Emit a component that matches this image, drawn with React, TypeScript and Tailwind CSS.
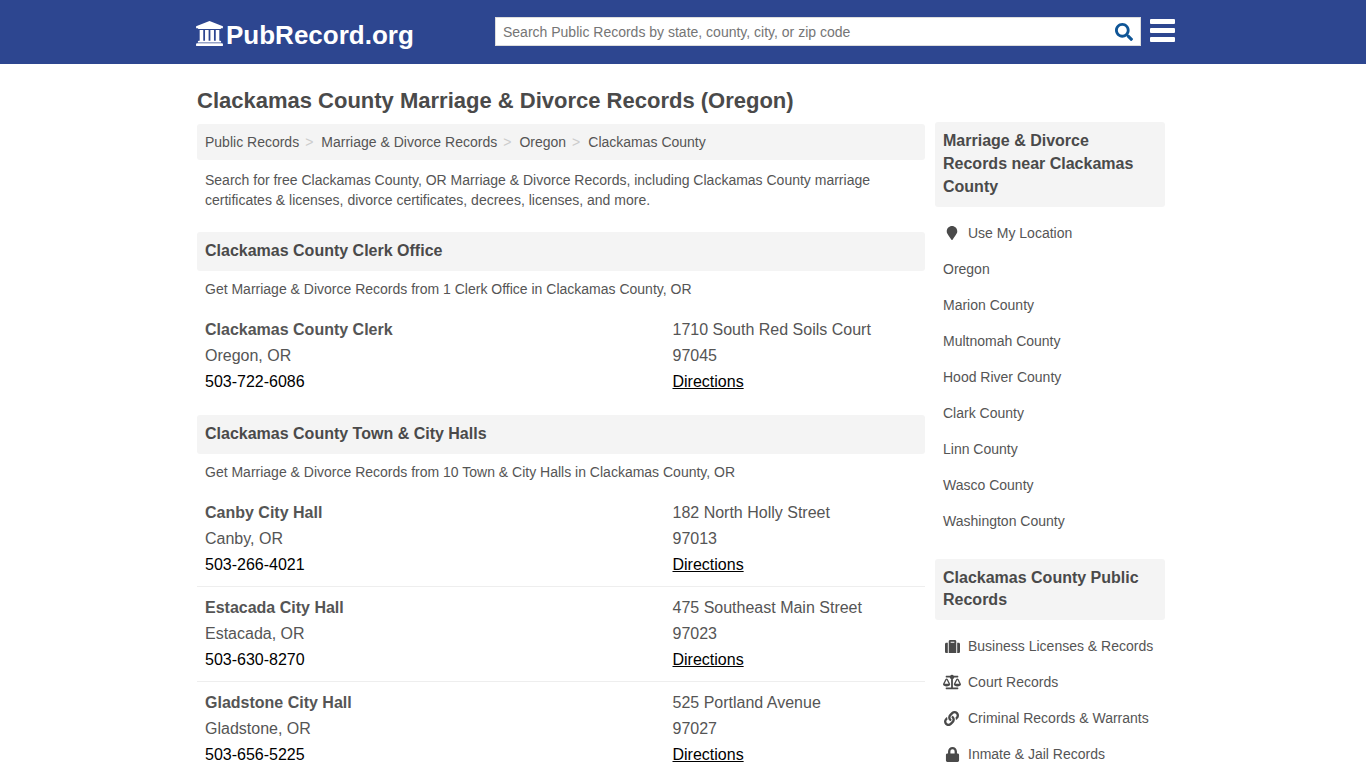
import { FaSearch, FaSuitcase, FaBalanceScale, FaLink, FaLock, FaMapMarker } from "react-icons/fa";

const Office = ({ name, city, phone, street, zip, border }: { name: string; city: string; phone: string; street: string; zip: string; border?: boolean }) => (
  <div className={`flex px-2 text-[16px] leading-[26px] ${border ? "pb-[8px] border-b border-[#eeeeee] mb-[8px]" : "pb-[9px]"}`}>
    <div className="w-[467.5px]">
      <div className="font-bold">{name}</div>
      <div>{city}</div>
      <div className="text-black">{phone}</div>
    </div>
    <div>
      <div>{street}</div>
      <div>{zip}</div>
      <div className="text-black underline">Directions</div>
    </div>
  </div>
);

const Heading = ({ children }: { children: string }) => (
  <h2 className="bg-[#f4f4f4] rounded-[3px] h-[39px] px-2 pb-[2px] flex items-center text-[16px] font-bold text-[#4a4a4a]">{children}</h2>
);

const Side = ({ children, icon }: { children: string; icon?: React.ReactNode }) => (
  <div className="h-[36px] flex items-center px-2 text-[14px] text-[#555555]">
    {icon && <span className="w-[25px] flex shrink-0 items-center text-[#4a4a4a]">{icon}</span>}
    {children}
  </div>
);

const Sep = () => <span className="text-[#cccccc] text-[14px] pl-[6px] pr-[8px]">&gt;</span>;

const Bank = () => (
  <svg viewBox="0 0 1920 1792" className="w-[27px] h-[25px] mr-[3px] -mt-[4px] shrink-0" fill="currentColor">
    <path d="M960 0l960 384v128h-128q0 26-20.5 45t-48.5 19h-1526q-28 0-48.5-19t-20.5-45h-128v-128z" />
    <path d="M256 640h256v768h128v-768h256v768h128v-768h256v768h128v-768h256v768h59q28 0 48.5 19t20.5 45v64h-1664v-64q0-26 20.5-45t48.5-19h59z" />
    <path d="M1851 1600q28 0 48.5 19t20.5 45v128h-1920v-128q0-26 20.5-45t48.5-19z" />
  </svg>
);

export default function App() {
  return (
    <div className="h-screen overflow-hidden bg-white text-[#555555] font-['Liberation_Sans',Arial,sans-serif]">
      <header className="h-16 bg-[#2d4690]">
        <div className="w-[968px] ml-[197px] h-full flex items-center relative">
          <div className="w-[299px] shrink-0 flex items-center text-white font-bold text-[26px] -ml-[1px] pt-[6px]">
            <Bank />
            <span>PubRecord.org</span>
          </div>
          <div className="w-[646px] shrink-0 h-[29px] -mt-[1px] pt-[1px] bg-white border border-[#dddddd] flex items-center justify-between pl-[7px] pr-[7px] text-[14px] text-[#757575]">
            <span>Search Public Records by state, county, city, or zip code</span>
            <FaSearch className="w-[18px] h-[18px] text-[#0f5596]" />
          </div>
          <div className="ml-[9px] -mt-[3px] w-[25px] shrink-0 flex flex-col gap-[4px]">
            <div className="h-[5px] bg-white rounded-[1px]" />
            <div className="h-[5px] bg-white rounded-[1px]" />
            <div className="h-[5px] bg-white rounded-[1px]" />
          </div>
        </div>
      </header>
      <main className="w-[968px] ml-[197px]">
        <h1 className="text-[22px] font-bold text-[#4a4a4a] leading-[26px] pt-[24px] pb-[10px]">Clackamas County Marriage &amp; Divorce Records (Oregon)</h1>
        <div className="flex gap-[10px] items-start">
          <div className="w-[728px]">
            <div className="bg-[#f4f4f4] rounded-[3px] h-[36px] px-2 flex items-center text-[14px]">
              <span>Public Records</span><Sep /><span>Marriage &amp; Divorce Records</span><Sep /><span>Oregon</span><Sep /><span>Clackamas County</span>
            </div>
            <p className="px-2 pt-[10px] pb-[22px] text-[14px] leading-[20px]">Search for free Clackamas County, OR Marriage &amp; Divorce Records, including Clackamas County marriage certificates &amp; licenses, divorce certificates, decrees, licenses, and more.</p>
            <Heading>Clackamas County Clerk Office</Heading>
            <p className="px-2 pt-[8px] pb-[18px] text-[14px] leading-[20px]">Get Marriage &amp; Divorce Records from 1 Clerk Office in Clackamas County, OR</p>
            <Office name="Clackamas County Clerk" city="Oregon, OR" phone="503-722-6086" street="1710 South Red Soils Court" zip="97045" />
            <div className="h-[11px]" />
            <Heading>Clackamas County Town &amp; City Halls</Heading>
            <p className="px-2 pt-[8px] pb-[18px] text-[14px] leading-[20px]">Get Marriage &amp; Divorce Records from 10 Town &amp; City Halls in Clackamas County, OR</p>
            <Office border name="Canby City Hall" city="Canby, OR" phone="503-266-4021" street="182 North Holly Street" zip="97013" />
            <Office border name="Estacada City Hall" city="Estacada, OR" phone="503-630-8270" street="475 Southeast Main Street" zip="97023" />
            <Office border name="Gladstone City Hall" city="Gladstone, OR" phone="503-656-5225" street="525 Portland Avenue" zip="97027" />
          </div>
          <aside className="w-[230px] -mt-[2px]">
            <h3 className="bg-[#f4f4f4] rounded-[3px] px-2 pt-[7px] pb-[9px] text-[16px] leading-[23px] font-bold text-[#4a4a4a]">Marriage &amp; Divorce Records near Clackamas County</h3>
            <div className="mt-2 mb-[20px]">
              <Side icon={<FaMapMarker className="w-[14px] h-[14px] ml-[2px]" />}>Use My Location</Side>
              <Side>Oregon</Side>
              <Side>Marion County</Side>
              <Side>Multnomah County</Side>
              <Side>Hood River County</Side>
              <Side>Clark County</Side>
              <Side>Linn County</Side>
              <Side>Wasco County</Side>
              <Side>Washington County</Side>
            </div>
            <h3 className="bg-[#f4f4f4] rounded-[3px] px-2 pt-[8px] pb-[9px] text-[16px] leading-[22px] font-bold text-[#4a4a4a]">Clackamas County Public Records</h3>
            <div className="mt-2">
              <Side icon={<FaSuitcase className="w-[15px] h-[15px] ml-[2px]" />}>Business Licenses &amp; Records</Side>
              <Side icon={<FaBalanceScale className="w-[18px] h-[16px]" />}>Court Records</Side>
              <Side icon={<FaLink className="w-[15px] h-[15px] ml-[1px]" />}>Criminal Records &amp; Warrants</Side>
              <Side icon={<FaLock className="w-[15px] h-[15px] ml-[2px]" />}>Inmate &amp; Jail Records</Side>
            </div>
          </aside>
        </div>
      </main>
    </div>
  );
}
